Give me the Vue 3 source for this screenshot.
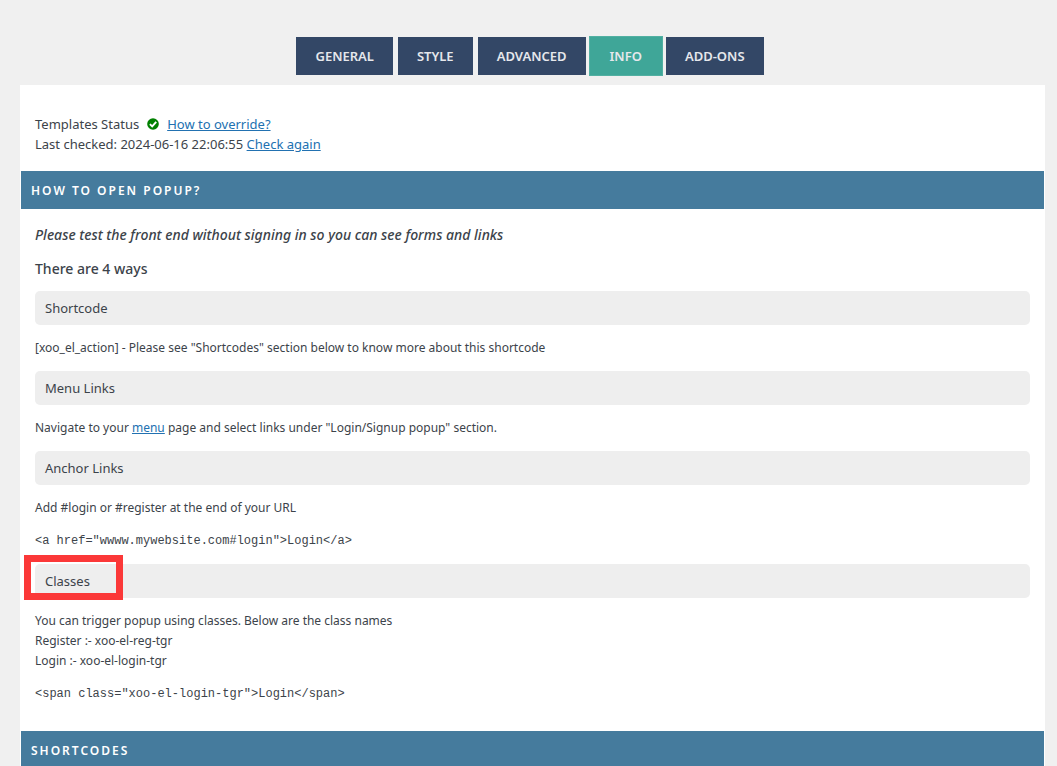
<script setup>
import { ref } from 'vue'

const tabs = ['General', 'Style', 'Advanced', 'Info', 'Add-ons']
const active = ref('Info')
const anchorCode = '<a href="wwww.mywebsite.com#login">Login</a>'
const spanCode = '<span class="xoo-el-login-tgr">Login</span>'
</script>

<template>
  <div class="page">
    <nav class="tabs">
      <button
        v-for="tab in tabs"
        :key="tab"
        type="button"
        class="tab"
        :class="{ active: tab === active }"
        @click="active = tab"
      >{{ tab }}</button>
    </nav>

    <main class="card">
      <section class="status">
        <div class="status-line">
          <span>Templates Status</span>
          <svg class="tick" viewBox="0 0 12 12" aria-hidden="true">
            <circle cx="6" cy="6" r="5.8" fill="#008000" />
            <path d="M2.9 6.1 L5.2 8.4 L9.2 3.9" fill="none" stroke="#fff" stroke-width="1.9" />
          </svg>
          <a href="#override">How to override?</a>
        </div>
        <div>Last checked: 2024-06-16 22:06:55 <a href="#check">Check again</a></div>
      </section>

      <h2 class="bar">How to open popup?</h2>
      <section class="body">
        <p class="notice">Please test the front end without signing in so you can see forms and links</p>
        <h3 class="ways">There are 4 ways</h3>

        <h4 class="item">Shortcode</h4>
        <p>[xoo_el_action] - Please see "Shortcodes" section below to know more about this shortcode</p>

        <h4 class="item">Menu Links</h4>
        <p>Navigate to your <a href="#menu">menu</a> page and select links under "Login/Signup popup" section.</p>

        <h4 class="item">Anchor Links</h4>
        <p>Add #login or #register at the end of your URL</p>
        <pre>{{ anchorCode }}</pre>

        <h4 class="item">Classes<span class="marker"></span></h4>
        <p>
          You can trigger popup using classes. Below are the class names<br />
          Register :- xoo-el-reg-tgr<br />
          Login :- xoo-el-login-tgr
        </p>
        <pre>{{ spanCode }}</pre>
      </section>

      <h2 class="bar">Shortcodes</h2>
    </main>
  </div>
</template>

<style>
html {
  background: #f0f0f0;
}
body {
  margin: 0;
  height: 100vh;
  overflow: hidden;
}
</style>

<style scoped>
.page {
  padding: 36px 12px 0 20px;
  color: #3c434a;
  font: 12px/20px "Noto Sans", "Open Sans", sans-serif;
}
.tabs {
  display: flex;
  justify-content: center;
  align-items: center;
  gap: 5px;
  height: 40px;
  margin-bottom: 9px;
  padding-right: 5px;
}
.tab {
  height: 38px;
  padding: 0 19px;
  border: 0;
  background: #334766;
  color: #e6e8ec;
  font: 600 13px/20px "Noto Sans", "Open Sans", sans-serif;
  text-transform: uppercase;
  cursor: pointer;
}
.tab.active {
  height: 40px;
  margin: 0 -2px;
  padding: 0 20px;
  border: 1px solid #52b0a2;
  background: #3fa698;
}
.card {
  padding: 29px 1px 0;
  background: #fff;
}
.status {
  padding: 0 14px 17px;
  font-size: 13px;
}
.status-line {
  display: flex;
  align-items: center;
}
.tick {
  width: 12px;
  height: 12px;
  margin: 0 8px;
}
a {
  color: #2271b1;
  text-decoration: underline;
}
.bar {
  margin: 0;
  padding: 10px 10px 8px;
  background: #457b9d;
  color: #fff;
  font-size: 12px;
  font-weight: 600;
  line-height: 20px;
  letter-spacing: 2px;
  text-transform: uppercase;
}
.body {
  padding: 16px 14px 27px;
}
p,
pre {
  margin: 13px 0;
}
.body > .notice {
  margin: 0 0 14px;
  font-size: 14px;
  font-style: italic;
  font-weight: 500;
}
.ways {
  margin: 0 0 12px;
  font-size: 14px;
  font-weight: 500;
}
.item {
  position: relative;
  margin: 0;
  padding: 7px 10px;
  border-radius: 5px;
  background: #eee;
  font-size: 13px;
  font-weight: 400;
}
pre {
  font: 12px/20px "Liberation Mono", monospace;
}
.body > pre:last-child {
  margin-bottom: 0;
}
.marker {
  position: absolute;
  top: -9px;
  left: -11px;
  box-sizing: border-box;
  width: 99px;
  height: 45px;
  border: 7px solid #fb3838;
}
</style>
